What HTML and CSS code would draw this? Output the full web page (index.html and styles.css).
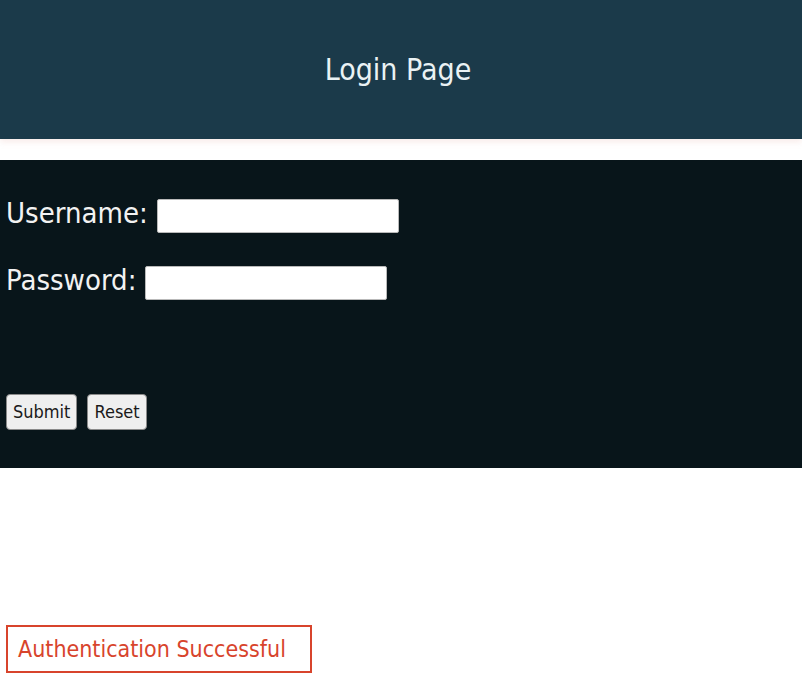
FILE: index.html
```html
<!DOCTYPE html>
<html lang="en">
  <head>
    <meta charset="UTF-8" />
    <meta name="viewport" content="width=device-width, initial-scale=1.0" />
    <title>Login Page</title>
    <link rel="stylesheet" href="styles.css">
  </head>
  <body>
    <header class="page-header">
      <h1>Login Page</h1>
    </header>

    <form class="login-form" onsubmit="return false;">
      <div class="form-row">
        <label for="username">Username:</label>
        <input type="text" id="username" name="username" />
      </div>
      <div class="form-row">
        <label for="password">Password:</label>
        <input type="password" id="password" name="password" />
      </div>
      <div class="form-actions">
        <button type="submit">Submit</button>
        <button type="reset">Reset</button>
      </div>
    </form>

    <div class="message">Authentication Successful</div>
  </body>
</html>
```

FILE: styles.css
```css
* {
  margin: 0;
  padding: 0;
  box-sizing: border-box;
}

body {
  font-family: "DejaVu Sans Condensed", "DejaVu Sans", sans-serif;
  background-color: #fff;
  min-height: 100vh;
}

.page-header {
  height: 139px;
  background-color: #1b3a4a;
  display: flex;
  align-items: center;
  justify-content: center;
  box-shadow: 0 3px 6px rgba(230, 180, 170, 0.25);
}

.page-header > h1 {
  font-weight: normal;
  font-size: 30px;
  color: #eaf2f4;
  margin-left: -6px;
}

.login-form {
  margin-top: 21px;
  background-color: #08151a;
  padding: 39px 7px 38px 6px;
  color: #f2f2f2;
}

.form-row {
  display: flex;
  align-items: flex-start;
  margin-bottom: 33px;
}

.form-row > label {
  font-size: 29px;
  line-height: 34px;
  margin-top: -3px;
  margin-right: 9px;
}

.form-row > input {
  width: 242px;
  height: 34px;
  border: 1px solid #b9b9b9;
  border-radius: 2px;
  background-color: #fff;
  outline: none;
}

.form-actions {
  margin-top: 94px;
  display: flex;
  gap: 10px;
}

.form-actions > button {
  font-family: inherit;
  font-size: 18px;
  line-height: 22px;
  padding: 6px 6px;
  color: #1a1a1a;
  background-color: #efefef;
  border: 1px solid #8a8a8a;
  border-radius: 4px;
}

.message {
  margin: 157px 0 0 6px;
  width: 306px;
  padding: 8px 10px;
  border: 2px solid #d8442c;
  color: #d8442c;
  font-size: 23px;
  line-height: 28px;
}
```
